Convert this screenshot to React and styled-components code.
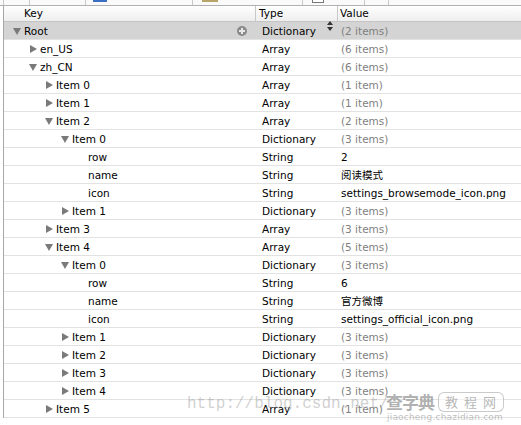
import styled, { createGlobalStyle } from "styled-components"

const GlobalStyle = createGlobalStyle`
  html, body {
    margin: 0;
    padding: 0;
    background: #fff;
  }
  body {
    font-family: "DejaVu Sans", "Noto Sans CJK SC", sans-serif;
    font-size: 10.5px;
    color: #000;
  }
`

const rows = [
  { level: 0, key: "Root", type: "Dictionary", value: "(2 items)", arrow: "open", selected: true },
  { level: 1, key: "en_US", type: "Array", value: "(6 items)", arrow: "closed" },
  { level: 1, key: "zh_CN", type: "Array", value: "(6 items)", arrow: "open" },
  { level: 2, key: "Item 0", type: "Array", value: "(1 item)", arrow: "closed" },
  { level: 2, key: "Item 1", type: "Array", value: "(1 item)", arrow: "closed" },
  { level: 2, key: "Item 2", type: "Array", value: "(2 items)", arrow: "open" },
  { level: 3, key: "Item 0", type: "Dictionary", value: "(3 items)", arrow: "open" },
  { level: 4, key: "row", type: "String", value: "2" },
  { level: 4, key: "name", type: "String", value: "阅读模式" },
  { level: 4, key: "icon", type: "String", value: "settings_browsemode_icon.png" },
  { level: 3, key: "Item 1", type: "Dictionary", value: "(3 items)", arrow: "closed" },
  { level: 2, key: "Item 3", type: "Array", value: "(3 items)", arrow: "closed" },
  { level: 2, key: "Item 4", type: "Array", value: "(5 items)", arrow: "open" },
  { level: 3, key: "Item 0", type: "Dictionary", value: "(3 items)", arrow: "open" },
  { level: 4, key: "row", type: "String", value: "6" },
  { level: 4, key: "name", type: "String", value: "官方微博" },
  { level: 4, key: "icon", type: "String", value: "settings_official_icon.png" },
  { level: 3, key: "Item 1", type: "Dictionary", value: "(3 items)", arrow: "closed" },
  { level: 3, key: "Item 2", type: "Dictionary", value: "(3 items)", arrow: "closed" },
  { level: 3, key: "Item 3", type: "Dictionary", value: "(3 items)", arrow: "closed" },
  { level: 3, key: "Item 4", type: "Dictionary", value: "(3 items)", arrow: "closed" },
  { level: 2, key: "Item 5", type: "Array", value: "(1 item)", arrow: "closed" },
]

const Page = styled.div`
  position: relative;
  width: 521px;
  height: 425px;
  overflow: hidden;
  background: #fff;
`

const Toolbar = styled.div`
  height: 5px;
  border-bottom: 1px solid #b0b0b0;
  display: flex;
  align-items: flex-start;
  background: #fafafa;
`

const ToolSep = styled.div`
  width: 1px;
  height: 5px;
  background: #c8c8c8;
  margin-left: ${(p) => p.left}px;
`

const ToolChip = styled.div`
  width: ${(p) => p.w}px;
  height: 2px;
  margin-left: ${(p) => p.left}px;
  background: ${(p) => p.color};
  border: ${(p) => (p.outline ? "1px solid #777" : "none")};
  border-top: none;
`

const Outline = styled.div`
  margin-left: 3px;
  border-left: 1px solid #a8a8a8;
`

const Grid = styled.div`
  display: grid;
  grid-template-columns: 251px 82px 1fr;
  align-items: center;
`

const Header = styled(Grid)`
  height: 15px;
  background: linear-gradient(#ffffff, #eeeeee);
  border-bottom: 1px solid #c4c4c4;
`

const HeaderCell = styled.div`
  height: 15px;
  line-height: 15px;
  padding-left: ${(p) => p.pad}px;
  border-left: ${(p) => (p.divider ? "1px solid #c8c8c8" : "none")};
`

const Row = styled(Grid)`
  height: 17px;
  border-bottom: 1px solid #e2e2e2;
  background: ${(p) => (p.selected ? "#d4d4d4" : "#fff")};
`

const KeyCell = styled.div`
  position: relative;
  display: flex;
  align-items: center;
  height: 17px;
  padding-left: ${(p) => 9 + p.level * 16}px;
`

const ArrowSlot = styled.div`
  width: 11px;
  height: 17px;
  display: flex;
  align-items: center;
  flex-shrink: 0;
`

const Arrow = styled.div`
  width: 0;
  height: 0;
  ${(p) =>
    p.open
      ? `
    border-left: 4px solid transparent;
    border-right: 4px solid transparent;
    border-top: 7px solid #7a7a7a;
    margin-top: 1px;
  `
      : `
    border-top: 4px solid transparent;
    border-bottom: 4px solid transparent;
    border-left: 7px solid #7a7a7a;
    margin-left: 1px;
  `}
`

const KeyText = styled.span`
  white-space: nowrap;
`

const AddButton = styled.div`
  position: absolute;
  right: 8px;
  top: 4px;
  width: 10px;
  height: 10px;
  border-radius: 50%;
  background: #8a8a8a;
  display: flex;
  align-items: center;
  justify-content: center;
  &::before,
  &::after {
    content: "";
    position: absolute;
    background: #e8e8e8;
  }
  &::before {
    width: 6px;
    height: 2px;
  }
  &::after {
    width: 2px;
    height: 6px;
  }
`

const TypeCell = styled.div`
  position: relative;
  padding-left: 7px;
  white-space: nowrap;
`

const Stepper = styled.svg`
  position: absolute;
  right: 4px;
  top: -4px;
`

const ValueCell = styled.div`
  padding-left: 4px;
  white-space: nowrap;
  color: ${(p) => (p.muted ? "#7f7f7f" : "#000")};
`

const Url = styled.span`
  position: absolute;
  left: 187px;
  top: 395px;
  font-family: "Liberation Mono", monospace;
  font-size: 16px;
  line-height: 18px;
  color: rgba(150, 150, 150, 0.45);
  pointer-events: none;
`

const Logo = styled.div`
  position: absolute;
  left: 386px;
  top: 392px;
  display: flex;
  flex-direction: column;
  align-items: center;
  pointer-events: none;
`

const LogoTop = styled.div`
  display: flex;
  align-items: center;
  gap: 4px;
`

const LogoMark = styled.span`
  font-family: "Noto Sans CJK SC", sans-serif;
  font-weight: 700;
  font-size: 17px;
  line-height: 20px;
  color: rgba(110, 110, 110, 0.55);
  letter-spacing: -1px;
`

const LogoBox = styled.span`
  font-family: "Noto Sans CJK SC", sans-serif;
  font-size: 13px;
  line-height: 18px;
  color: rgba(120, 120, 120, 0.55);
  border: 1px solid rgba(150, 150, 150, 0.5);
  border-radius: 6px;
  padding: 0 1px 0 6px;
  letter-spacing: 6px;
  background: rgba(255, 255, 255, 0.5);
`

const LogoUrl = styled.span`
  font-family: "DejaVu Sans", sans-serif;
  font-size: 9px;
  line-height: 10px;
  letter-spacing: 0.2px;
  color: rgba(150, 150, 150, 0.6);
`

function TreeRow({ r }) {
  const muted = r.value.startsWith("(")
  return (
    <Row selected={r.selected}>
      <KeyCell level={r.level}>
        <ArrowSlot>{r.arrow && <Arrow open={r.arrow === "open"} />}</ArrowSlot>
        <KeyText>{r.key}</KeyText>
        {r.selected && <AddButton />}
      </KeyCell>
      <TypeCell>
        {r.type}
        {r.selected && (
          <Stepper width="6" height="10" viewBox="0 0 6 10">
            <path d="M3 0 L6 4 L0 4 Z" fill="#333" />
            <path d="M0 6 L6 6 L3 10 Z" fill="#333" />
          </Stepper>
        )}
      </TypeCell>
      <ValueCell muted={muted}>{r.value}</ValueCell>
    </Row>
  )
}

const App = () => {
  return (
    <Page>
      <GlobalStyle />
      <Toolbar>
        <ToolSep left={3} />
        <ToolSep left={25} />
        <ToolSep left={55} />
        <ToolChip left={7} w={14} color="#3a6fc4" />
        <ToolSep left={85} />
        <ToolChip left={9} w={16} color="#b8a56a" />
        <ToolSep left={84} />
        <ToolChip left={9} w={10} color="#fff" outline />
        <ToolSep left={40} />
        <ToolSep left={23} />
      </Toolbar>
      <Outline>
        <Header>
          <HeaderCell pad={20}>Key</HeaderCell>
          <HeaderCell pad={3} divider>Type</HeaderCell>
          <HeaderCell pad={2} divider>Value</HeaderCell>
        </Header>
        {rows.map((r, i) => (
          <TreeRow key={i} r={r} />
        ))}
      </Outline>
      <Url>http://blog.csdn.net/</Url>
      <Logo>
        <LogoTop>
          <LogoMark>查字典</LogoMark>
          <LogoBox>教程网</LogoBox>
        </LogoTop>
        <LogoUrl>jiaocheng.chazidian.com</LogoUrl>
      </Logo>
    </Page>
  )
}

export default App
